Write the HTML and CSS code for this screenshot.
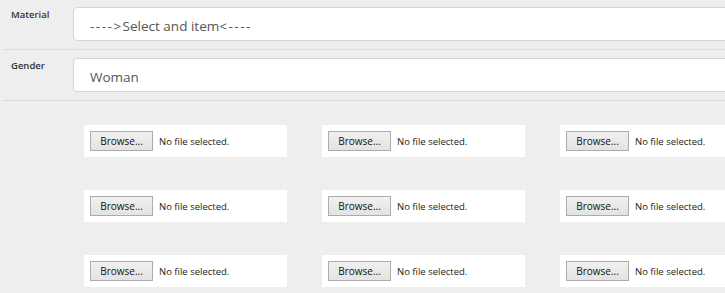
FILE: index.html
```html
<!DOCTYPE html>
<html lang="en">
<head>
    <meta charset="UTF-8">
    <meta name="viewport" content="width=device-width, initial-scale=1.0">
    <title>Product details</title>
    <link rel="stylesheet" href="styles.css">
</head>
<body>
    <form class="product-form">
        <div class="form-row">
            <label class="row-label" for="material">Material</label>
            <div class="field"><span class="dashes">----&gt;</span>Select and item<span class="dashes">&lt;----</span></div>
        </div>
        <div class="form-row">
            <label class="row-label" for="gender">Gender</label>
            <div class="field">Woman</div>
        </div>

        <div class="uploads">
            <div class="upload"><span class="browse">Browse...</span><span class="file-name">No file selected.</span></div>
            <div class="upload"><span class="browse">Browse...</span><span class="file-name">No file selected.</span></div>
            <div class="upload"><span class="browse">Browse...</span><span class="file-name">No file selected.</span></div>
            <div class="upload"><span class="browse">Browse...</span><span class="file-name">No file selected.</span></div>
            <div class="upload"><span class="browse">Browse...</span><span class="file-name">No file selected.</span></div>
            <div class="upload"><span class="browse">Browse...</span><span class="file-name">No file selected.</span></div>
            <div class="upload"><span class="browse">Browse...</span><span class="file-name">No file selected.</span></div>
            <div class="upload"><span class="browse">Browse...</span><span class="file-name">No file selected.</span></div>
            <div class="upload"><span class="browse">Browse...</span><span class="file-name">No file selected.</span></div>
        </div>
    </form>
</body>
</html>
```

FILE: styles.css
```css
body { margin: 0; background: #eeeeee; font-family: "Open Sans", "Noto Sans", sans-serif; overflow: hidden; }
.product-form { width: 800px; padding-left: 3px; }
.form-row { display: flex; align-items: flex-start; padding: 8px 0 8px; border-bottom: 1px solid #dcdcdc; }
.form-row:first-child { padding-top: 7px; }
.row-label { width: 62px; padding-left: 8px; padding-top: 1px; font-size: 9.5px; font-weight: 600; color: #333; }
.field { flex: 1; height: 32px; line-height: 36px; overflow: hidden; padding-left: 16px; background: #fff; border: 1px solid #d6d6d6; border-radius: 4px; font-size: 13.5px; color: #555; }
.dashes { letter-spacing: 1.5px; }
.uploads { display: grid; grid-template-columns: repeat(3, 203px); column-gap: 35px; row-gap: 33px; padding: 24px 0 0 81px; }
.upload { display: flex; align-items: center; height: 32px; padding: 0 6px; background: #fff; box-sizing: border-box; }
.browse { width: 63px; height: 20px; box-sizing: border-box; border: 1px solid #acacac; background: linear-gradient(#f0f0f0, #e3e3e3); font-size: 10px; line-height: 18px; text-align: center; color: #111; }
.file-name { margin-left: 6px; font-size: 9.5px; color: #222; }
```
